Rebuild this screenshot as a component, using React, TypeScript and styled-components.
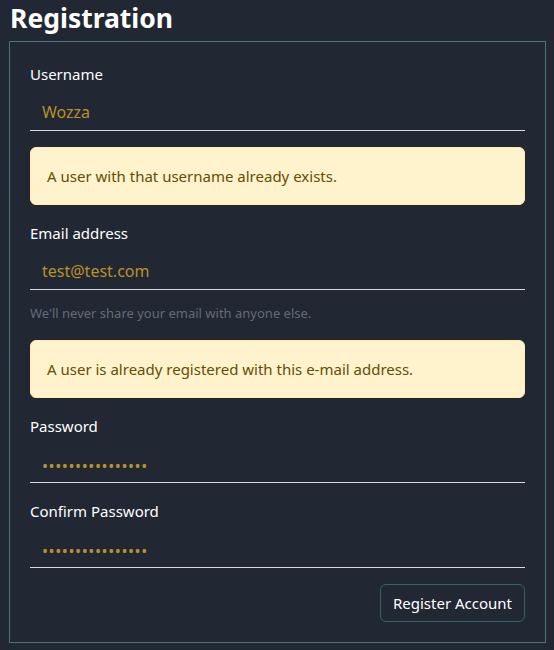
import React from "react";
import styled, { createGlobalStyle } from "styled-components";

const Global = createGlobalStyle`
  html, body {
    margin: 0;
    padding: 0;
    background: #212733;
  }
  body {
    font-family: "Noto Sans", "Open Sans", sans-serif;
    color: #ffffff;
  }
  * { box-sizing: border-box; }
`;

const Page = styled.div`
  padding: 0 8px 0 9px;
  width: 554px;
  height: 650px;
  overflow: hidden;
`;

const Title = styled.h1`
  margin: 0 0 5px 1px;
  padding-top: 1px;
  font-size: 26.5px;
  line-height: 35px;
  font-weight: 700;
  color: #ffffff;
`;

const Card = styled.form`
  border: 1px solid #4a737d;
  padding: 20px 20px 20px;
  display: flex;
  flex-direction: column;
`;

const Group = styled.div`
  display: flex;
  flex-direction: column;
  margin-bottom: 16px;
`;

const Label = styled.label`
  font-size: 15px;
  line-height: 24px;
  margin-bottom: 6px;
  color: #ffffff;
`;

const Input = styled.input<{ $secret?: boolean }>`
  height: 39px;
  width: 100%;
  background: transparent;
  border: none;
  border-bottom: 1px solid #d6d8dc;
  padding: ${(p) => (p.$secret ? "6px 12px 0" : "2px 12px 0")};
  font-family: inherit;
  font-size: 16px;
  letter-spacing: ${(p) => (p.$secret ? "0.6px" : "0")};
  color: #b8912a;
  outline: none;
`;

const Help = styled.div`
  margin-top: 13px;
  font-size: 13px;
  line-height: 21px;
  color: #646b75;
`;

const Alert = styled.div`
  margin-bottom: 16px;
  padding: 16px;
  background: #fff3cd;
  border: 1px solid #ffecb5;
  border-radius: 6px;
  color: #664d03;
  font-size: 15px;
  line-height: 24px;
`;

const Actions = styled.div`
  display: flex;
  justify-content: flex-end;
`;

const Button = styled.button`
  height: 38px;
  padding: 0 12px;
  background: transparent;
  border: 1px solid #36606a;
  border-radius: 6px;
  color: #ffffff;
  font-family: inherit;
  font-size: 15px;
  line-height: 24px;
  cursor: pointer;
`;

export default function App() {
  const pw = "passwordpassword";
  return (
    <Page>
      <Global />
      <Title>Registration</Title>
      <Card onSubmit={(e) => e.preventDefault()}>
        <Group>
          <Label htmlFor="username">Username</Label>
          <Input id="username" defaultValue="Wozza" />
        </Group>
        <Alert>A user with that username already exists.</Alert>
        <Group>
          <Label htmlFor="email">Email address</Label>
          <Input id="email" defaultValue="test@test.com" />
          <Help>We'll never share your email with anyone else.</Help>
        </Group>
        <Alert>A user is already registered with this e-mail address.</Alert>
        <Group>
          <Label htmlFor="password">Password</Label>
          <Input id="password" type="password" $secret defaultValue={pw} />
        </Group>
        <Group>
          <Label htmlFor="confirm">Confirm Password</Label>
          <Input id="confirm" type="password" $secret defaultValue={pw} />
        </Group>
        <Actions>
          <Button type="submit">Register Account</Button>
        </Actions>
      </Card>
    </Page>
  );
}
